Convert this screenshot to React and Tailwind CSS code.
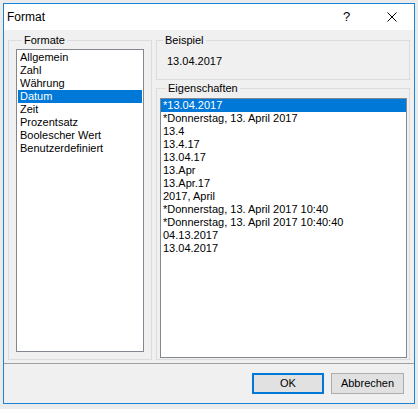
import React from 'react';

const formate = ['Allgemein', 'Zahl', 'Währung', 'Datum', 'Zeit', 'Prozentsatz', 'Boolescher Wert', 'Benutzerdefiniert'];

const eigenschaften = [
  '*13.04.2017',
  '*Donnerstag, 13. April 2017',
  '13.4',
  '13.4.17',
  '13.04.17',
  '13.Apr',
  '13.Apr.17',
  '2017, April',
  '*Donnerstag, 13. April 2017 10:40',
  '*Donnerstag, 13. April 2017 10:40:40',
  '04.13.2017',
  '13.04.2017',
];

export default function App() {
  return (
    <div
      className="w-[418px] h-[409px] bg-[#ebebeb] pt-[3px] pl-[3px] text-black"
      style={{ fontFamily: '"Liberation Sans", Arial, sans-serif' }}
    >
      <div className="w-[412px] h-[401px] border border-[#1883d7] bg-[#f0f0f0] flex flex-col">
        {/* Title bar */}
        <div className="h-[26px] bg-white flex items-center pl-[3px] text-[12px]">
          <span className="flex-1">Format</span>
          <div className="w-[45px] h-full flex items-center justify-center text-[13px]">?</div>
          <div className="w-[45px] h-full flex items-center justify-center">
            <svg width="10" height="10" viewBox="0 0 10 10">
              <path d="M0.5 0.5 L9.5 9.5 M9.5 0.5 L0.5 9.5" stroke="#000" strokeWidth="1" />
            </svg>
          </div>
        </div>

        {/* Body */}
        <div className="flex gap-[4px] px-[4px] pt-[4px] text-[11px]">
          <fieldset className="w-[144px] h-[326px] border border-[#dcdcdc] px-[7px] pb-[7px]">
            <legend className="ml-[6px] px-[2px] leading-[13px]">Formate</legend>
            <div className="mt-[2px] h-[303px] bg-white border border-[#828790] p-[1px]">
              {formate.map((f) => (
                <div
                  key={f}
                  className={`h-[13px] leading-[13px] pl-[2px] whitespace-nowrap ${f === 'Datum' ? 'bg-[#0078d7] text-white' : ''}`}
                >
                  {f}
                </div>
              ))}
            </div>
          </fieldset>

          <div className="w-[254px] flex flex-col gap-[2px]">
            <fieldset className="h-[46px] border border-[#dcdcdc]">
              <legend className="ml-[6px] px-[2px] leading-[13px]">Beispiel</legend>
              <div className="pl-[10px] pt-[8px] leading-[13px]">13.04.2017</div>
            </fieldset>
            <fieldset className="h-[278px] border border-[#dcdcdc] pl-[3px] pr-[2px] pb-[1px]">
              <legend className="ml-[6px] px-[2px] leading-[13px]">Eigenschaften</legend>
              <div className="mt-[3px] h-[260px] bg-white border border-[#828790]">
                {eigenschaften.map((e, i) => (
                  <div
                    key={i}
                    className={`h-[13px] leading-[13px] pl-[2px] whitespace-nowrap ${i === 0 ? 'bg-[#0078d7] text-white' : ''}`}
                  >
                    {e}
                  </div>
                ))}
              </div>
            </fieldset>
          </div>
        </div>

        {/* Separator */}
        <div className="mt-[3px] border-t border-[#a0a0a0]" />

        {/* Buttons */}
        <div className="mt-[9px] flex justify-end gap-[7px] pr-[10px] text-[11px]">
          <button className="w-[72px] h-[21px] bg-[#e1e1e1] border-2 border-[#0078d7]">OK</button>
          <button className="w-[73px] h-[21px] bg-[#e1e1e1] border border-[#adadad]">Abbrechen</button>
        </div>
      </div>
    </div>
  );
}
